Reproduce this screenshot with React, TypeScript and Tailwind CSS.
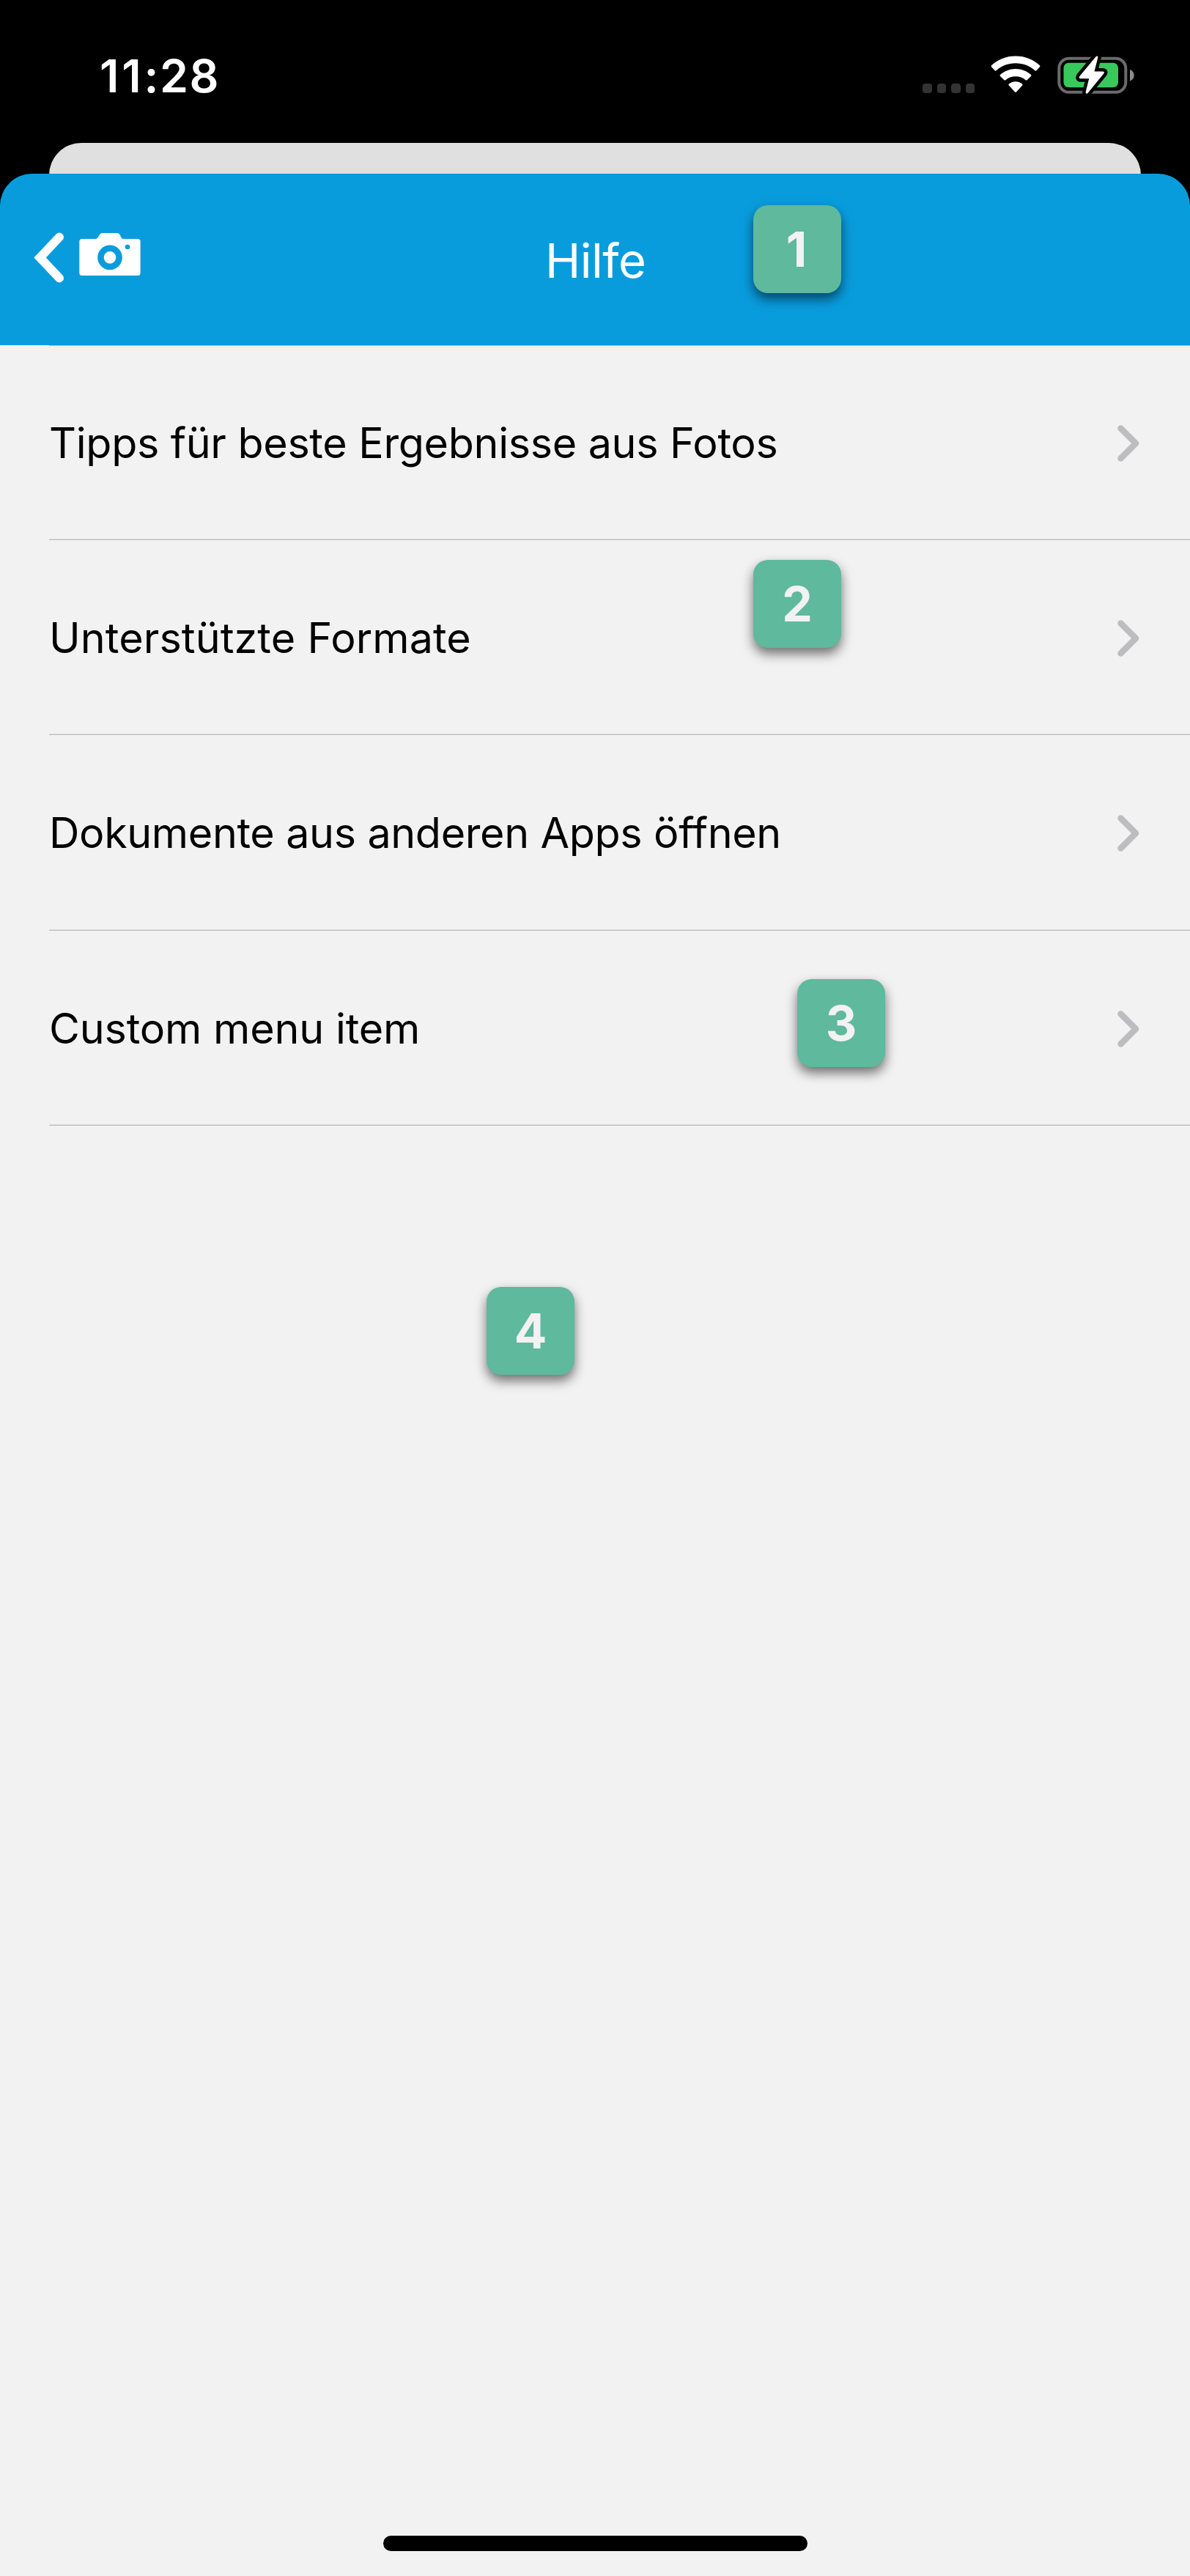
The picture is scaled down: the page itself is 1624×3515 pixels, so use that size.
const rows = [
  { label: "Tipps für beste Ergebnisse aus Fotos", box: "h-[265px]", tracking: "tracking-[-0.317px]" },
  { label: "Unterstützte Formate", box: "h-[266px]", tracking: "tracking-[0.1px]", badge: "2", place: "left-[961px] top-[27px]" },
  { label: "Dokumente aus anderen Apps öffnen", box: "h-[267px]", tracking: "tracking-[-0.35px]" },
  { label: "Custom menu item", box: "h-[266px]", tracking: "tracking-[-0.16px]", badge: "3", place: "left-[1021px] top-[66px]" },
];

function Badge({ n, place }: { n: string; place: string }) {
  return (
    <div
      className={`absolute ${place} flex size-[120px] items-center justify-center rounded-[20px] bg-[#5fb99c] text-[66px] leading-none font-bold text-[#f2f2f2] shadow-[0_8px_16px_rgba(0,0,0,0.55)]`}
    >
      <span className={n === "1" ? "-translate-x-px" : ""}>{n}</span>
    </div>
  );
}

function WifiIcon() {
  return (
    <svg className="h-[52px] w-[68px]" viewBox="0 0 68 52" fill="#fff">
      <path d="M34 0.500C47 0.500 58.500 5.300 67 13.200Q67.900 14.200 67 15.200L62.300 20.300Q61.400 21.100 60.400 20.300C53.500 13.800 44.200 10.200 34 10.200C23.800 10.200 14.500 13.800 7.600 20.300Q6.600 21.100 5.700 20.300L1 15.200Q0.100 14.200 1 13.200C9.500 5.300 21 0.500 34 0.500Z" />
      <path d="M34 18C42 18 49.500 21 55 26Q56 27 55 28L49.600 33.200Q48.600 34 47.600 33.200C44 30 39.300 28.200 34 28.200C28.700 28.200 24 30 20.400 33.200Q19.400 34 18.400 33.200L13 28Q12 27 13 26C18.500 21 26 18 34 18Z" />
      <path d="M34 35.300C37.500 35.300 40.700 36.600 43.200 38.800Q44 39.700 43.200 40.600L35 49.400Q34 50.300 33 49.400L24.800 40.600Q24 39.700 24.800 38.800C27.300 36.600 30.500 35.300 34 35.300Z" />
    </svg>
  );
}

function BatteryIcon() {
  const bolt =
    "M52.600 1.200Q55.800 -0.600 55.200 3L50.500 21.500H62Q65.200 21.800 63.200 24.600L41.500 51Q38.800 53.200 38.600 49.800L43.200 31.200H31.500Q28.600 30.800 30.300 28Z";
  return (
    <svg className="h-[54px] w-[106px]" viewBox="0 0 106 54">
      <rect x="2.300" y="3.800" width="91" height="46" rx="13.500" fill="none" stroke="#6b6b6b" strokeWidth="4" />
      <path d="M99 19C106.500 21.500 106.500 32 99 34.500Z" fill="#8c8c8c" />
      <rect x="8.500" y="9.800" width="74.500" height="33.500" rx="7" fill="#38c95c" />
      <path d={bolt} fill="#000" stroke="#000" strokeWidth="9" strokeLinejoin="round" />
      <path d={bolt} fill="#fff" />
    </svg>
  );
}

function StatusBar() {
  return (
    <header className="flex h-[195px] items-start justify-between pr-[75px] pl-[136px]">
      <div className="mt-[72px] flex text-[62.5px] leading-[63px] font-semibold text-white">
        <span className="tracking-[3.800px]">11</span>
        <span className="tracking-[1.600px]">:28</span>
      </div>
      <div className="flex items-start pt-[76px]">
        <div className="mt-[38px] flex gap-[7px]">
          {[0, 1, 2, 3].map((i) => (
            <i key={i} className="block size-[12.5px] rounded-[4px] bg-[#333]" />
          ))}
        </div>
        <div className="ml-[22px]">
          <WifiIcon />
        </div>
        <div className="ml-[23px]">
          <BatteryIcon />
        </div>
      </div>
    </header>
  );
}

function NavBar() {
  return (
    <div className="relative -mt-[42px] flex h-[234px] items-start rounded-t-[44px] bg-[#099cdd]">
      <svg className="mt-[78px] ml-[44px] h-[76px] w-[150px]" viewBox="0 0 150 76">
        <path d="M37 8.500L10.600 36.500L37 64.500" fill="none" stroke="#fff" strokeWidth="12" strokeLinecap="round" />
        <path
          fill="#fff"
          d="M68 11H86.500Q88.500 11 89.500 9L92.500 4.500Q93.500 3 95.500 3H116Q118 3 119 4.500L121.500 9Q122 11 124 11H144Q147.600 11 147.600 14.500V57.500Q147.600 61 144 61H68Q64.300 61 64.300 57.500V14.500Q64.300 11 68 11Z"
        />
        <circle cx="106" cy="36.300" r="12.600" fill="#fff" stroke="#099cdd" strokeWidth="8.500" />
        <circle cx="130" cy="22" r="3.300" fill="#099cdd" />
      </svg>
      <h1 className="mt-[86px] ml-[550px] text-[65px] leading-[65px] font-normal tracking-[-0.5px] text-white">Hilfe</h1>
      <Badge n="1" place="left-[1028px] top-[43px]" />
    </div>
  );
}

function Chevron() {
  return (
    <svg className="h-[52px] w-[32px]" viewBox="0 0 32 52" fill="none">
      <path d="M5.500 5.500L26 26L5.500 46.500" stroke="#bdbdbf" strokeWidth="8.500" strokeLinecap="round" strokeLinejoin="round" />
    </svg>
  );
}

export default function App() {
  return (
    <div className="flex h-[3515px] w-[1624px] flex-col bg-[#f2f2f2] font-['Inter','Liberation_Sans',sans-serif]">
      <div className="shrink-0 bg-black">
        <StatusBar />
        <div className="mx-[67px] h-[84px] rounded-t-[44px] bg-[#e0e0e0]" />
        <NavBar />
      </div>
      <ul className="ml-[67px] border-t border-[#b9bcbf]">
        {rows.map((r) => (
          <li
            key={r.label}
            className={`relative flex items-center justify-between border-b border-[#bcbcc2] pt-[2px] pr-[68px] shadow-[inset_0_-1px_0_#dededf] ${r.box}`}
          >
            <span className={`text-[57.4px] leading-none whitespace-nowrap text-black ${r.tracking}`}>{r.label}</span>
            <Chevron />
            {r.badge && <Badge n={r.badge} place={r.place!} />}
          </li>
        ))}
      </ul>
      <div className="relative flex-1">
        <Badge n="4" place="left-[664px] top-[220px]" />
      </div>
      <div className="mx-auto mb-[34px] h-[21px] w-[579px] rounded-full bg-black" />
    </div>
  );
}
